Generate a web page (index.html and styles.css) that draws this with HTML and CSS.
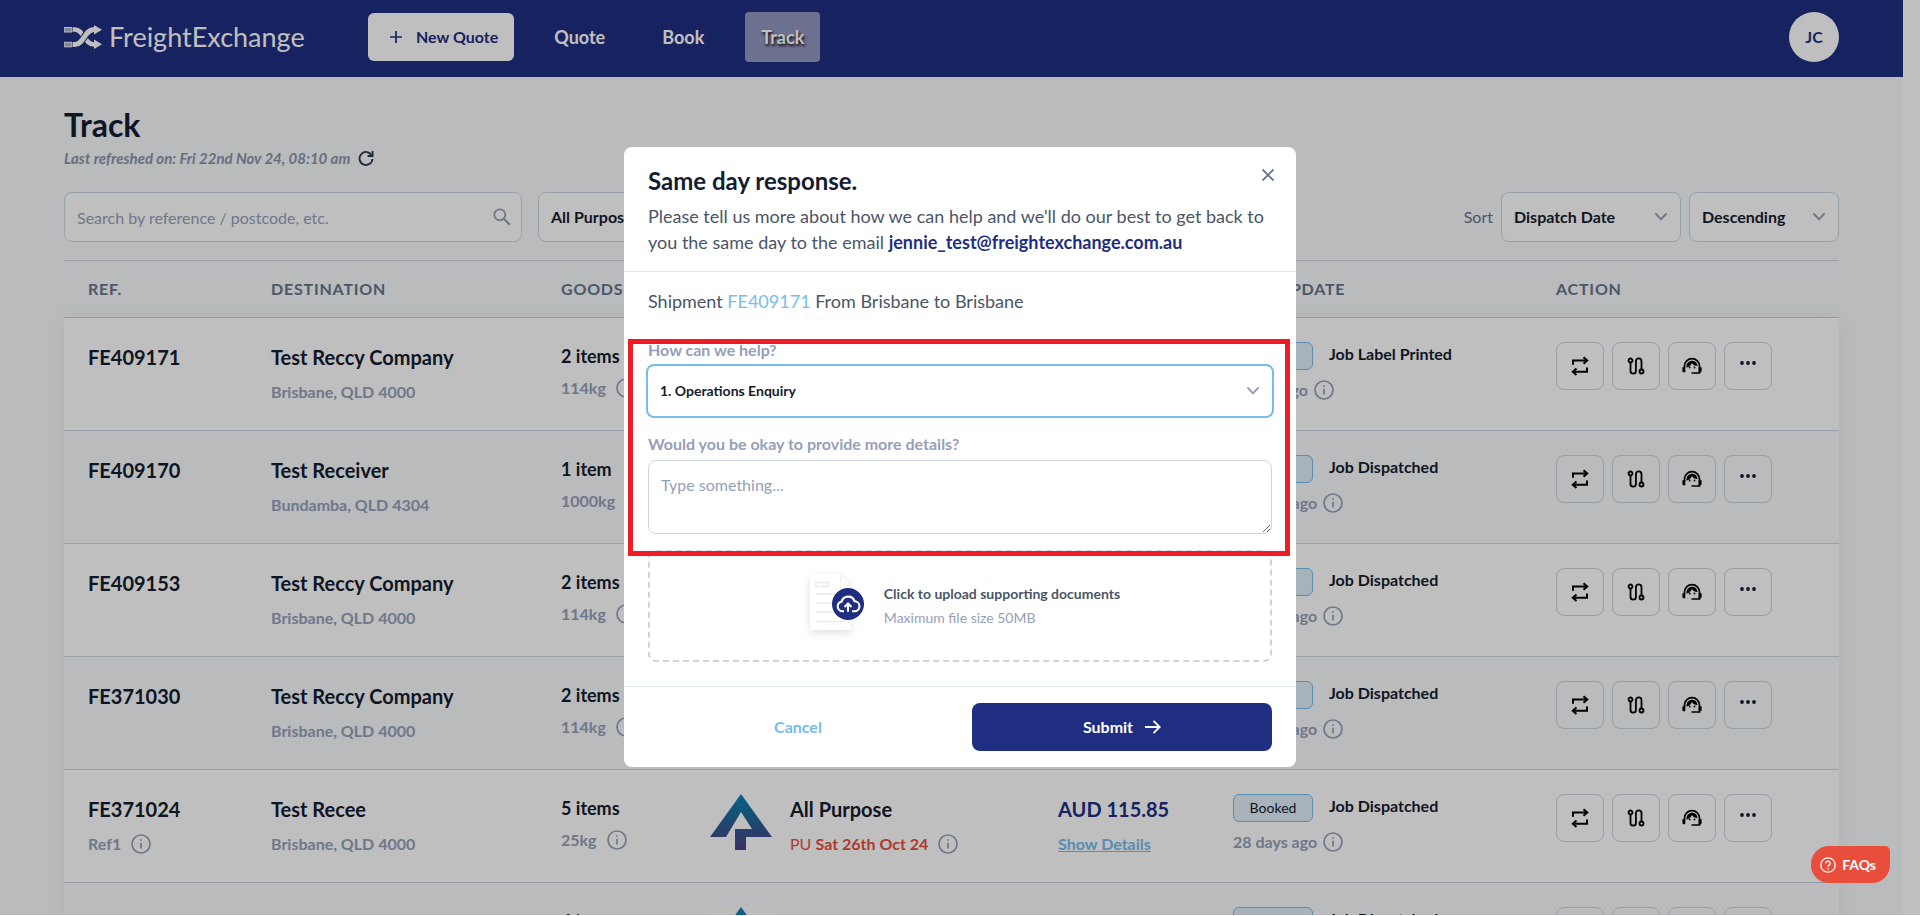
FILE: index.html
```html
<!DOCTYPE html>
<html lang="en">
<head>
<meta charset="utf-8">
<title>Track - FreightExchange</title>
<link rel="stylesheet" href="styles.css">
</head>
<body>
<svg class="sprite" aria-hidden="true">
  <symbol id="info" viewBox="0 0 20 20"><circle cx="10" cy="10" r="9" fill="none" stroke="currentColor" stroke-width="1.7"/><path d="M10 8.7v5.8M10 5.2v1.6" stroke="currentColor" stroke-width="1.7"/></symbol>
  <symbol id="chevron" viewBox="0 0 12 8"><path d="M1 1l5 5.4L11 1" fill="none" stroke="currentColor" stroke-width="1.9" stroke-linecap="round" stroke-linejoin="round"/></symbol>
  <symbol id="repeat" viewBox="0 0 18 20"><path d="M2 8.700V4.500H15M16 11.500V15.700H3" fill="none" stroke="currentColor" stroke-width="2"/><path d="M12.500 1.300l3.700 3.200-3.700 3.200M5.500 12.500l-3.700 3.200 3.700 3.200" fill="none" stroke="currentColor" stroke-width="2"/></symbol>
  <symbol id="route" viewBox="0 0 18 18"><g fill="none" stroke="currentColor" stroke-width="1.800"><circle cx="3.500" cy="3.500" r="2"/><circle cx="14.500" cy="14.500" r="2"/><path d="M3.500 5.500V14a2.700 2.700 0 0 0 5.400 0V4.200a2.800 2.800 0 0 1 5.600 0v8.300"/></g></symbol>
  <symbol id="agent" viewBox="0 0 20 18"><path d="M2.500 11V9.200a7.500 7.500 0 0 1 15 0V16H9.500" fill="none" stroke="currentColor" stroke-width="1.700"/><path d="M.4 10.200h2.900v5H1.700a1.300 1.300 0 0 1-1.300-1.300zM16.700 10.200h2.900v3.700a1.300 1.300 0 0 1-1.300 1.300h-1.600zM4.500 10.600C4 5.600 8 3.500 10.500 3.800c3 .2 4.900 2.600 5 5.200-2.700 0-4.600-1.200-5.600-3-.9 2.300-2.800 4-5.400 4.600z"/><circle cx="7.700" cy="10.500" r=".9"/><circle cx="12.500" cy="10.500" r=".9"/></symbol>
  <symbol id="dots" viewBox="0 0 16 4"><circle cx="2" cy="2" r="1.900"/><circle cx="8" cy="2" r="1.900"/><circle cx="14" cy="2" r="1.900"/></symbol>
  <symbol id="carrier" viewBox="0 0 62 56"><path d="M31 0L62 43H36V56H25V35H42L31 18 16 43H0z" fill="url(#carrier-fill)"/></symbol>
  <linearGradient id="carrier-fill" x1="0" y1="0" x2="0" y2="1"><stop offset="0" stop-color="#0d83bd"/><stop offset=".3" stop-color="#17719f"/><stop offset="1" stop-color="#523d85"/></linearGradient>
</svg>

<div class="app">
  <header class="topbar">
    <a class="brand" href="#">
      <svg class="brand-mark" viewBox="0 0 38 24" aria-hidden="true">
        <path d="M9 4.500h2c8.500 0 9.500 15 19 15h1" fill="none" stroke="#fff" stroke-width="4.600"/>
        <path d="M9 19.500h2C20 19.500 20.500 4.500 30 4.500h1" fill="none" stroke="#1f2e80" stroke-width="7"/>
        <path d="M9 19.500h2C20 19.500 20.500 4.500 30 4.500h1" fill="none" stroke="#fff" stroke-width="5"/>
        <path d="M30 0l8 4.700-8 4.700zM30 14.600l8 4.700-8 4.700z" fill="#fff"/>
        <path d="M0 2.500h8v4.500H0zM0 17.300h8v4.500H0z" fill="#a9afd0" stroke="#fff"/>
      </svg>
      <span>FreightExchange</span>
    </a>
    <button class="new-quote" type="button">
      <svg width="12" height="12" viewBox="0 0 12 12" aria-hidden="true"><path d="M6 0v12M0 6h12" stroke="currentColor" stroke-width="1.700"/></svg>
      New Quote
    </button>
    <nav class="nav">
      <a href="#">Quote</a>
      <a href="#">Book</a>
      <a class="active" href="#">Track</a>
    </nav>
    <button class="avatar" type="button">JC</button>
  </header>

  <main class="page">
    <h1>Track</h1>
    <p class="refreshed">Last refreshed on: Fri 22nd Nov 24, 08:10 am
      <button type="button" aria-label="Refresh"><svg width="16" height="16" viewBox="0 0 16 16" aria-hidden="true"><path d="M13.800 5.500A6.500 6.500 0 1 0 14.500 9M14.600 1v5h-5" fill="none" stroke="currentColor" stroke-width="1.800"/></svg></button>
    </p>

    <div class="toolbar">
      <div class="field search">
        <input type="text" aria-label="Search" placeholder="Search by reference / postcode, etc.">
        <svg width="18" height="18" viewBox="0 0 18 18" aria-hidden="true"><circle cx="6.800" cy="6.800" r="5.500" fill="none" stroke="currentColor" stroke-width="1.800"/><path d="M10.800 10.800l6 6" stroke="currentColor" stroke-width="2.200"/></svg>
      </div>
      <div class="field service"><select aria-label="Service"><option>All Purpose</option></select><svg class="chev"><use href="#chevron"/></svg></div>
      <div class="sort">
        <label for="sort-by">Sort</label>
        <div class="field sort-by"><select id="sort-by"><option>Dispatch Date</option></select><svg class="chev"><use href="#chevron"/></svg></div>
        <div class="field sort-dir"><select aria-label="Sort direction"><option>Descending</option></select><svg class="chev"><use href="#chevron"/></svg></div>
      </div>
    </div>

    <table class="jobs">
      <thead>
        <tr><th class="c-ref">REF.</th><th class="c-dest">DESTINATION</th><th class="c-goods">GOODS</th><th class="c-carrier">CARRIER</th><th class="c-price">PRICE</th><th class="c-status">LAST UPDATE</th><th class="c-action">ACTION</th></tr>
      </thead>
      <tbody>
        <tr>
          <td><div class="lead">FE409171</div></td>
          <td><div class="lead">Test Reccy Company</div><div class="sub">Brisbane, QLD 4000</div></td>
          <td><div class="count">2 items</div><div class="sub">114kg <svg class="info"><use href="#info"/></svg></div></td>
          <td></td><td></td>
          <td><div class="state"><span class="badge">Booked</span><span>Job Label Printed</span></div><div class="sub ago">4 days ago <svg class="info"><use href="#info"/></svg></div></td>
          <td><div class="actions"><button type="button" aria-label="Repeat"><svg class="i-repeat"><use href="#repeat"/></svg></button><button type="button" aria-label="Route"><svg class="i-route"><use href="#route"/></svg></button><button type="button" aria-label="Support"><svg class="i-agent"><use href="#agent"/></svg></button><button type="button" class="more" aria-label="More"><svg class="i-dots"><use href="#dots"/></svg></button></div></td>
        </tr>
        <tr>
          <td><div class="lead">FE409170</div></td>
          <td><div class="lead">Test Receiver</div><div class="sub">Bundamba, QLD 4304</div></td>
          <td><div class="count">1 item</div><div class="sub">1000kg <svg class="info"><use href="#info"/></svg></div></td>
          <td></td><td></td>
          <td><div class="state"><span class="badge">Booked</span><span>Job Dispatched</span></div><div class="sub ago">28 days ago <svg class="info"><use href="#info"/></svg></div></td>
          <td><div class="actions"><button type="button" aria-label="Repeat"><svg class="i-repeat"><use href="#repeat"/></svg></button><button type="button" aria-label="Route"><svg class="i-route"><use href="#route"/></svg></button><button type="button" aria-label="Support"><svg class="i-agent"><use href="#agent"/></svg></button><button type="button" class="more" aria-label="More"><svg class="i-dots"><use href="#dots"/></svg></button></div></td>
        </tr>
        <tr>
          <td><div class="lead">FE409153</div></td>
          <td><div class="lead">Test Reccy Company</div><div class="sub">Brisbane, QLD 4000</div></td>
          <td><div class="count">2 items</div><div class="sub">114kg <svg class="info"><use href="#info"/></svg></div></td>
          <td></td><td></td>
          <td><div class="state"><span class="badge">Booked</span><span>Job Dispatched</span></div><div class="sub ago">28 days ago <svg class="info"><use href="#info"/></svg></div></td>
          <td><div class="actions"><button type="button" aria-label="Repeat"><svg class="i-repeat"><use href="#repeat"/></svg></button><button type="button" aria-label="Route"><svg class="i-route"><use href="#route"/></svg></button><button type="button" aria-label="Support"><svg class="i-agent"><use href="#agent"/></svg></button><button type="button" class="more" aria-label="More"><svg class="i-dots"><use href="#dots"/></svg></button></div></td>
        </tr>
        <tr>
          <td><div class="lead">FE371030</div></td>
          <td><div class="lead">Test Reccy Company</div><div class="sub">Brisbane, QLD 4000</div></td>
          <td><div class="count">2 items</div><div class="sub">114kg <svg class="info"><use href="#info"/></svg></div></td>
          <td></td><td></td>
          <td><div class="state"><span class="badge">Booked</span><span>Job Dispatched</span></div><div class="sub ago">28 days ago <svg class="info"><use href="#info"/></svg></div></td>
          <td><div class="actions"><button type="button" aria-label="Repeat"><svg class="i-repeat"><use href="#repeat"/></svg></button><button type="button" aria-label="Route"><svg class="i-route"><use href="#route"/></svg></button><button type="button" aria-label="Support"><svg class="i-agent"><use href="#agent"/></svg></button><button type="button" class="more" aria-label="More"><svg class="i-dots"><use href="#dots"/></svg></button></div></td>
        </tr>
        <tr>
          <td><div class="lead">FE371024</div><div class="sub">Ref1 <svg class="info"><use href="#info"/></svg></div></td>
          <td><div class="lead">Test Recee</div><div class="sub">Brisbane, QLD 4000</div></td>
          <td><div class="count">5 items</div><div class="sub">25kg <svg class="info"><use href="#info"/></svg></div></td>
          <td><div class="carrier"><svg class="logo"><use href="#carrier"/></svg><div><div class="lead">All Purpose</div><div class="sub"><span class="pickup">PU <b>Sat 26th Oct 24</b></span> <svg class="info"><use href="#info"/></svg></div></div></div></td>
          <td><div class="lead price">AUD 115.85</div><div class="sub"><a href="#">Show Details</a></div></td>
          <td><div class="state"><span class="badge">Booked</span><span>Job Dispatched</span></div><div class="sub ago">28 days ago <svg class="info"><use href="#info"/></svg></div></td>
          <td><div class="actions"><button type="button" aria-label="Repeat"><svg class="i-repeat"><use href="#repeat"/></svg></button><button type="button" aria-label="Route"><svg class="i-route"><use href="#route"/></svg></button><button type="button" aria-label="Support"><svg class="i-agent"><use href="#agent"/></svg></button><button type="button" class="more" aria-label="More"><svg class="i-dots"><use href="#dots"/></svg></button></div></td>
        </tr>
        <tr>
          <td></td>
          <td></td>
          <td><div class="count">4 items</div></td>
          <td><div class="carrier"><svg class="logo framed"><use href="#carrier"/></svg></div></td>
          <td></td>
          <td><div class="state"><span class="badge">Booked</span><span>Job Dispatched</span></div></td>
          <td><div class="actions"><button type="button" aria-label="Repeat"></button><button type="button" aria-label="Route"></button><button type="button" aria-label="Support"></button><button type="button" aria-label="More"></button></div></td>
        </tr>
      </tbody>
    </table>
  </main>
</div>

<div class="overlay">
  <form class="modal" role="dialog" aria-labelledby="dialog-title">
    <div class="modal-head">
      <div class="title-row">
        <h2 id="dialog-title">Same day response.</h2>
        <button class="close" type="button" aria-label="Close"><svg width="14" height="14" viewBox="0 0 14 14" aria-hidden="true"><path d="M1.500 1.500l11 11M12.500 1.500l-11 11" stroke="currentColor" stroke-width="1.800"/></svg></button>
      </div>
      <p>Please tell us more about how we can help and we'll do our best to get back to you the same day to the email <b>jennie_test@freightexchange.com.au</b></p>
    </div>
    <div class="modal-body">
      <p class="shipment">Shipment <a href="#">FE409171</a> From Brisbane to Brisbane</p>
      <label class="form-label" for="topic">How can we help?</label>
      <div class="field topic"><select id="topic"><option>1. Operations Enquiry</option></select><svg class="chev"><use href="#chevron"/></svg></div>
      <label class="form-label" for="details">Would you be okay to provide more details?</label>
      <textarea id="details" placeholder="Type something..."></textarea>
      <button class="upload" type="button">
        <svg class="upload-icon" viewBox="0 2 76 80" aria-hidden="true">
          <path class="sheet" d="M10 10h31l10 11v45H10z" fill="#fff"/>
          <path d="M40.500 10v6a5 5 0 0 0 5 5H51z" fill="#fff" stroke="#eef0f2"/>
          <path d="M16 18.500h12v4H16zM16 30h28M16 39h28M16 48h28M16 57.500h28" fill="none" stroke="#e9e9ea" stroke-width="1.600"/>
          <circle cx="48" cy="40" r="16" fill="#1f2e80"/>
          <path d="M44 47.300h-1.500a4.900 4.900 0 0 1-.9-9.700 6.800 6.800 0 0 1 13-.3 5 5 0 0 1-.3 10H52M48 47.800v-7M44.500 43l3.500-3.500 3.500 3.500" fill="none" stroke="#fff" stroke-width="2.100"/>
        </svg>
        <span class="upload-text"><b>Click to upload supporting documents</b><span>Maximum file size 50MB</span></span>
      </button>
    </div>
    <div class="modal-foot">
      <button class="cancel" type="button">Cancel</button>
      <button class="submit" type="submit">Submit <svg width="16" height="14" viewBox="0 0 16 14" aria-hidden="true"><path d="M0 7h14.500M8.500 .8L14.700 7l-6.200 6.200" fill="none" stroke="currentColor" stroke-width="1.900"/></svg></button>
    </div>
    <div class="highlight"></div>
  </form>
</div>

<button class="faqs" type="button"><svg width="16" height="16" viewBox="0 0 16 16" aria-hidden="true"><circle cx="8" cy="8" r="7.200" fill="none" stroke="currentColor" stroke-width="1.300"/><path d="M5.900 6.400a2.100 2.100 0 1 1 3.200 1.700c-.8.500-1.100.8-1.100 1.600M8 11v1.400" fill="none" stroke="currentColor" stroke-width="1.300"/></svg>FAQs</button>
</body>
</html>
```
FILE: styles.css
```css
* { box-sizing: border-box; }
body {
  margin: 0;
  background: #fff;
  color: #141c2f;
  font: 16px/24px Lato, "Liberation Sans", sans-serif;
  height: 100vh;
  overflow: hidden;
}
h1, h2, p { margin: 0; }
button { font: inherit; color: inherit; background: none; border: 0; padding: 0; cursor: pointer; }
input, select, textarea { font: inherit; color: inherit; }
svg { flex: none; fill: currentColor; }
.sprite { position: absolute; width: 0; height: 0; }

.app { height: calc(100vh - 1px); margin-right: 17px; background: #f7fafc; overflow: hidden; }

/* Top bar */
.topbar { display: flex; align-items: center; height: 77px; padding: 0 64px 3px; background: #1f2e80; color: #fff; }
.brand { display: flex; align-items: center; gap: 7px; width: 304px; color: #fff; font-size: 27px; line-height: 32px; text-decoration: none; }
.brand-mark { width: 38px; height: 24px; }
.new-quote { display: flex; align-items: center; gap: 14px; height: 48px; padding: 0 16px 0 22px; border-radius: 6px; background: #fff; color: #1f2e80; font-weight: 700; }
.nav { display: flex; gap: 25px; margin-left: 24px; }
.nav a { padding: 13px 16px; border-radius: 4px; color: #fff; font-size: 18px; font-weight: 700; text-decoration: none; }
.nav .active { background: #9297c0; text-shadow: 1px 2px 3px #000; }
.avatar { width: 50px; height: 50px; margin-left: auto; border-radius: 50%; background: #fff; color: #1f2e80; font-weight: 700; }

/* Page heading and filters */
.page { padding: 28px 64px 0; }
h1 { font-size: 32px; line-height: 40px; font-weight: 700; }
.refreshed { display: flex; align-items: center; gap: 8px; margin-top: 1px; color: #8a94aa; font-size: 15px; font-style: italic; font-weight: 700; }
.refreshed button { display: flex; color: #2d3748; }
.toolbar { display: flex; gap: 16px; margin: 22px 0 18px; }
.field { position: relative; height: 50px; border: 1px solid #cbd5e0; border-radius: 8px; background: #fff; }
.field input, .field select { width: 100%; height: 100%; padding: 0 12px; border: 0; outline: 0; border-radius: 8px; background: none; appearance: none; font-weight: 700; }
.field input { font-weight: 400; }
::placeholder { color: #94a0b8; opacity: 1; }
.search { display: flex; align-items: center; width: 458px; padding-right: 10px; color: #94a0b8; }
.service { width: 180px; }
.chev { position: absolute; right: 13px; top: 50%; width: 12px; height: 8px; margin-top: -4px; color: #94a0b8; pointer-events: none; }
.sort { display: flex; align-items: center; gap: 8px; margin-left: auto; color: #66728a; }
.sort select { color: #141c2f; }
.sort-by { width: 180px; }
.sort-dir { width: 150px; }

/* Shipment table */
.jobs { width: 100%; table-layout: fixed; border-spacing: 0; border-top: 1px solid #cbd5e0; }
th { height: 57px; padding: 0 24px; border-bottom: 1px solid #cbd5e0; color: #66758c; font-weight: 700; text-align: left; letter-spacing: 0.05em; }
tbody { box-shadow: 0 0 24px rgba(0, 0, 0, 0.06); }
td { height: 113px; padding: 24px 0 0 24px; border-bottom: 1px solid #cbd5e0; background: #fff; vertical-align: top; white-space: nowrap; }
tr:nth-child(even) td { background: #f7fafc; }
.c-ref { width: 183px; }
.c-dest { width: 290px; }
.c-goods { width: 149px; }
.c-carrier { width: 348px; }
.c-price { width: 175px; }
.c-status { width: 323px; }
.lead { font-size: 20px; line-height: 30px; font-weight: 700; }
.count { font-size: 18px; line-height: 28px; font-weight: 700; }
.sub { display: flex; align-items: center; gap: 10px; margin-top: 4px; line-height: 28px; color: #94a0b8; font-weight: 700; }
.lead + .sub { margin-top: 6px; }
.info { width: 20px; height: 20px; }
.state { display: flex; gap: 16px; font-weight: 700; }
.badge { width: 80px; height: 28px; border: 1px solid #76bcec; border-radius: 6px; background: #e0eef9; font-size: 14px; line-height: 26px; font-weight: 400; text-align: center; }
.ago { gap: 6px; margin-top: 6px; }
.carrier { display: flex; gap: 18px; }
.logo { width: 62px; height: 56px; }
.framed { border-radius: 6px; background: #fdfefb; }
.pickup { color: #e94e3d; font-weight: 400; }
.price { color: #1f2e80; }
.sub a { color: #76bcec; }
.actions { display: flex; gap: 8px; }
.actions button { display: flex; align-items: center; justify-content: center; width: 48px; height: 48px; border: 1px solid #cbd5e0; border-radius: 8px; color: #000; }
.actions .more { padding-bottom: 6px; color: #141c2f; }
.i-repeat { width: 18px; height: 20px; }
.i-route { width: 18px; height: 18px; }
.i-agent { width: 20px; height: 18px; }
.i-dots { width: 16px; height: 4px; }

/* Dialog */
.overlay { position: fixed; inset: 0 0 1px; display: flex; align-items: center; justify-content: center; padding-bottom: 2px; background: rgba(0, 0, 0, 0.25); }
.modal { position: relative; width: 672px; border-radius: 8px; background: #fff; color: #4a5568; }
.modal-head { padding: 20px 24px 16px; border-bottom: 1px solid #e2e8f0; font-size: 18px; line-height: 26px; }
.title-row { display: flex; justify-content: space-between; align-items: flex-start; margin-bottom: 8px; }
h2 { color: #141c2f; font-size: 24px; line-height: 28px; font-weight: 700; }
.close { display: flex; padding: 1px 0; margin-right: -3px; color: #66758c; }
.modal-head b { color: #1f2e80; }
.modal-body { display: flex; flex-direction: column; padding: 15px 24px 24px; }
.shipment { margin-bottom: 9px; font-size: 18px; line-height: 28px; }
.shipment a { color: #76bcec; text-decoration: none; }
.form-label { margin-top: 14px; color: #94a0b8; font-weight: 700; }
.topic { height: 54px; margin: 2px -2px 0; border: 2px solid #76bcec; color: #141c2f; font-size: 14px; }
.modal textarea { height: 74px; margin-top: 4px; padding: 12px; border: 1px solid #cbd5e0; border-radius: 8px; resize: vertical; }
.upload { display: flex; align-items: center; justify-content: center; gap: 8px; height: 112px; margin-top: 16px; border: 2px dashed #cbd5e0; border-radius: 8px; font-size: 14px; text-align: left; }
.upload-icon { width: 76px; height: 80px; }
.sheet { filter: drop-shadow(0 3px 4px rgba(0, 0, 0, 0.12)); }
.upload-text { display: flex; flex-direction: column; }
.upload-text span { color: #94a0b8; }
.modal-foot { display: grid; grid-template-columns: 1fr 1fr; gap: 24px; padding: 16px 24px; border-top: 1px solid #e2e8f0; font-weight: 700; }
.cancel { color: #76bcec; }
.submit { display: flex; align-items: center; justify-content: center; gap: 12px; height: 48px; border-radius: 8px; background: #1f2e80; color: #fff; }
.highlight { position: absolute; inset: 192px 6px 211px 4px; border: 5px solid #ee1c24; pointer-events: none; }

.faqs { position: fixed; right: 30px; bottom: 33px; display: flex; align-items: center; gap: 6px; height: 37px; padding: 0 14px 0 9px; border-radius: 18px 5px 18px 18px; background: #e94e3d; color: #fff; font-size: 14px; font-weight: 700; }
```
